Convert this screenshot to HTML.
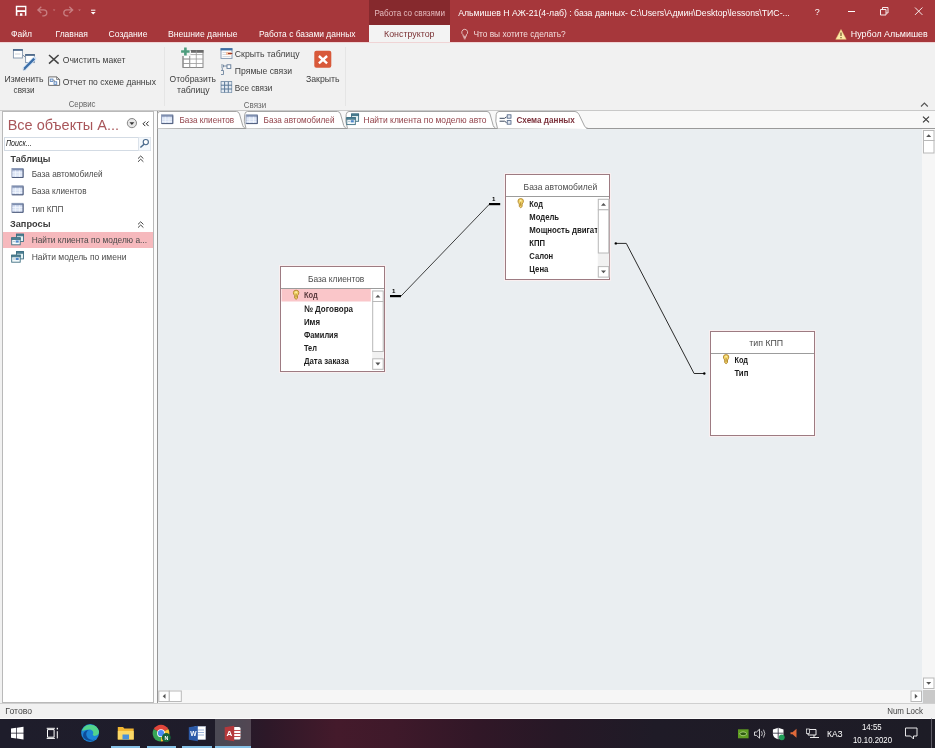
<!DOCTYPE html>
<html lang="ru">
<head>
<meta charset="utf-8">
<title>Access</title>
<style>
*{box-sizing:border-box;margin:0;padding:0}
html,body{width:935px;height:748px;overflow:hidden;background:#f1f1f1;font-family:"Liberation Sans","DejaVu Sans",sans-serif;font-size:9.2px;color:#444}
.abs{position:absolute}
#title{left:0;top:0;width:935px;height:42px;background:#a6373b}
#ctx{left:369px;top:0;width:81px;height:25px;background:#86292d}
#atab{left:369px;top:25px;width:81px;height:18px;background:#f3f3f3}
#ribbon{left:0;top:42px;width:935px;height:69px;background:#f1f1f1;border-top:1px solid #f0d4d5;border-bottom:1px solid #c9c9c9}
.vsep{width:1px;background:#e5e5e5;top:47px;height:59px}
#nav{left:2px;top:111px;width:152px;height:592px;background:#fff;border:1px solid #b9b9b9}
#search{left:4px;top:137px;width:147px;height:14px;background:#fff;border:1px solid #d3dbe4}
#sel{left:3px;top:232px;width:150px;height:16px;background:#f6b9bd}
#tabstrip{left:157px;top:111px;width:778px;height:18px;background:#f8f8f8;border-left:1px solid #969696}
#doc{left:157px;top:128px;width:778px;height:575px;background:#eaeef1;border-top:1px solid #9a9a9a;border-left:1px solid #969696}
#vscroll{left:922px;top:129px;width:13px;height:561px;background:#f6f6f6}
#hscroll{left:158px;top:690px;width:764px;height:13px;background:#f6f6f6}
#corner{left:923px;top:690px;width:12px;height:13px;background:#c9c9c9}
.sb{background:#fff;border:1px solid #b9b9b9}
.tbl{background:#fff;border:1px solid #9d7b82;box-shadow:0 0 0 1px rgba(252,238,240,.9)}
.tbl .h{position:absolute;left:0;right:0;top:0;border-bottom:1px solid #9c9c9c}
#status{left:0;top:703px;width:935px;height:16px;background:#f1f1f1;border-top:1px solid #cfcfcf;border-bottom:1px solid #fbfbfb}
#task{left:0;top:719px;width:935px;height:29px;background:linear-gradient(90deg,#1e1d2b 0%,#1f1c2a 24%,#2d1828 28.500%,#441a2b 36%,#3f192a 42%,#311727 51%,#261826 60%,#1f1b27 70%,#1d1c26 100%)}
#tact{left:215px;top:719px;width:36px;height:29px;background:rgba(255,255,255,.2)}
.ul{top:746px;height:2px;background:#86c1e6}
svg{position:absolute;left:0;top:0;will-change:transform}
text{font-family:"Liberation Sans","DejaVu Sans",sans-serif;white-space:pre}
</style>
</head>
<body>
<div id="title" class="abs"></div>
<div id="ctx" class="abs"></div>
<div id="atab" class="abs"></div>
<div id="ribbon" class="abs"></div>
<div class="abs vsep" style="left:164px"></div>
<div class="abs vsep" style="left:345px"></div>
<div id="tabstrip" class="abs"></div>
<div class="abs" style="left:154px;top:112px;width:3px;height:591px;background:#fbfbfb"></div>
<div id="nav" class="abs"></div>
<div id="search" class="abs"></div>
<div id="sel" class="abs"></div>
<div id="doc" class="abs"></div>
<div id="vscroll" class="abs"></div>
<div id="hscroll" class="abs"></div>
<div id="corner" class="abs"></div>
<div class="abs tbl" style="left:280px;top:266px;width:105px;height:105.5px"><div class="h" style="height:22px"></div></div>
<div class="abs tbl" style="left:504.5px;top:174px;width:105px;height:105.5px"><div class="h" style="height:22px"></div></div>
<div class="abs tbl" style="left:710px;top:330.5px;width:105px;height:105.5px"><div class="h" style="height:22px"></div></div>

<div id="status" class="abs"></div>
<div id="task" class="abs"></div>
<div id="tact" class="abs"></div>
<div class="abs ul" style="left:111px;width:29px"></div>
<div class="abs ul" style="left:147px;width:29px"></div>
<div class="abs ul" style="left:182px;width:30px"></div>
<div class="abs ul" style="left:215px;width:36px"></div>
<svg width="935" height="748" viewBox="0 0 935 748">
<text x="374.5" y="15.6" font-size="9" fill="#e6bcbf" textLength="70.5" lengthAdjust="spacingAndGlyphs">Работа со связями</text>
<text x="458.2" y="15.6" font-size="9" fill="#ffffff" textLength="331.6" lengthAdjust="spacingAndGlyphs">Альмишев Н АЖ-21(4-лаб) : база данных- C:\Users\Админ\Desktop\lessons\ТИС-...</text>
<text x="11.0" y="37.2" font-size="9.4" fill="#ffffff" textLength="21.0" lengthAdjust="spacingAndGlyphs">Файл</text>
<text x="55.5" y="37.2" font-size="9.4" fill="#ffffff" textLength="32.5" lengthAdjust="spacingAndGlyphs">Главная</text>
<text x="108.5" y="37.2" font-size="9.4" fill="#ffffff" textLength="39.0" lengthAdjust="spacingAndGlyphs">Создание</text>
<text x="168.0" y="37.2" font-size="9.4" fill="#ffffff" textLength="69.5" lengthAdjust="spacingAndGlyphs">Внешние данные</text>
<text x="259.0" y="37.2" font-size="9.4" fill="#ffffff" textLength="96.5" lengthAdjust="spacingAndGlyphs">Работа с базами данных</text>
<text x="384.0" y="37.2" font-size="9.4" fill="#7c3335" textLength="50.5" lengthAdjust="spacingAndGlyphs">Конструктор</text>
<text x="473.4" y="37.2" font-size="9.4" fill="#f3dcdc" textLength="92.3" lengthAdjust="spacingAndGlyphs">Что вы хотите сделать?</text>
<text x="850.8" y="37.2" font-size="9.4" fill="#ffffff" textLength="77.0" lengthAdjust="spacingAndGlyphs">Нурбол Альмишев</text>
<text x="814.8" y="14.8" font-size="9.5" fill="#ffffff" textLength="5.0" lengthAdjust="spacingAndGlyphs">?</text>
<path d="M848 11.5H855" fill="none" stroke="#ffffff" stroke-width="1"/>
<path d="M880.5 9.5h5.5v5.5h-5.5z M882.5 9.5v-2h5.5v5.5h-2" fill="none" stroke="#ffffff" stroke-width="0.9"/>
<path d="M915 7.5l7.4 7.4M922.4 7.5l-7.4 7.4" fill="none" stroke="#ffffff" stroke-width="0.9"/>
<path d="M15.8 5.7h10.6v10.1h-10.6z" fill="#ffffff"/>
<rect x="17.2" y="7.2" width="7.9" height="3" fill="#a6373b"/>
<rect x="17.4" y="12" width="7.5" height="3.8" fill="#a6373b"/>
<rect x="20" y="13.3" width="2.4" height="2.5" fill="#ffffff"/>
<path d="M41.3 6.8l-3.4 3.1l3.4 3.1 M38.2 9.9h5.6a3 3 0 0 1 0 6h-1.5" fill="none" stroke="#c87f82" stroke-width="1.3"/>
<path d="M52.8 9.6l1.3 1.5l1.3-1.500z" fill="#c87f82"/>
<path d="M69.300 6.800l3.400 3.100l-3.400 3.100 M72.400 9.900h-5.600a3 3 0 0 0 0 6h1.500" fill="none" stroke="#c87f82" stroke-width="1.3"/>
<path d="M78.200 9.600l1.300 1.500l1.300-1.500z" fill="#c87f82"/>
<path d="M91 10.200h4.400" fill="none" stroke="#ffffff" stroke-width="1"/>
<path d="M90.800 11.900h4.800l-2.400 2.500z" fill="#ffffff"/>
<path d="M464.7 29.3a3 3 0 0 1 1.6 5.5v1.5h-3.2v-1.5a3 3 0 0 1 1.6-5.5z M463.4 37.6h2.6 M463.8 38.8h1.8" fill="none" stroke="#f3dcdc" stroke-width="0.8"/>
<path d="M841 29.5l5.2 9.8h-10.4z" fill="#fbe9a7" stroke="#e9cf7c" stroke-width="0.5"/>
<path d="M841 32.6v3.4 M841 37v1.2" fill="none" stroke="#6b4b1d" stroke-width="1.1"/>
<text x="4.5" y="81.9" font-size="9.2" fill="#3d3d3d" textLength="39.1" lengthAdjust="spacingAndGlyphs">Изменить</text>
<text x="13.6" y="93.3" font-size="9.2" fill="#3d3d3d" textLength="20.9" lengthAdjust="spacingAndGlyphs">связи</text>
<text x="62.7" y="63.1" font-size="9.2" fill="#3d3d3d" textLength="62.8" lengthAdjust="spacingAndGlyphs">Очистить макет</text>
<text x="62.7" y="85.4" font-size="9.2" fill="#3d3d3d" textLength="93.3" lengthAdjust="spacingAndGlyphs">Отчет по схеме данных</text>
<text x="68.7" y="107.4" font-size="9.2" fill="#666" textLength="26.8" lengthAdjust="spacingAndGlyphs">Сервис</text>
<text x="169.6" y="81.9" font-size="9.2" fill="#3d3d3d" textLength="46.4" lengthAdjust="spacingAndGlyphs">Отобразить</text>
<text x="177.0" y="93.3" font-size="9.2" fill="#3d3d3d" textLength="32.6" lengthAdjust="spacingAndGlyphs">таблицу</text>
<text x="234.8" y="56.9" font-size="9.2" fill="#3d3d3d" textLength="64.7" lengthAdjust="spacingAndGlyphs">Скрыть таблицу</text>
<text x="234.8" y="73.9" font-size="9.2" fill="#3d3d3d" textLength="57.2" lengthAdjust="spacingAndGlyphs">Прямые связи</text>
<text x="234.8" y="90.5" font-size="9.2" fill="#3d3d3d" textLength="37.6" lengthAdjust="spacingAndGlyphs">Все связи</text>
<text x="306.0" y="81.9" font-size="9.2" fill="#3d3d3d" textLength="33.6" lengthAdjust="spacingAndGlyphs">Закрыть</text>
<text x="243.8" y="107.5" font-size="9.2" fill="#666" textLength="22.4" lengthAdjust="spacingAndGlyphs">Связи</text>
<path d="M921 106.5l3.4-3.4l3.4 3.4" fill="none" stroke="#555" stroke-width="1.1"/>
<rect x="13.4" y="49.6" width="9" height="8.4" fill="#fff" stroke="#8295ac" stroke-width="0.9"/>
<rect x="13" y="49.2" width="9.8" height="1.6" fill="#3f5e80"/>
<path d="M15 54h5.5" fill="none" stroke="#c4c9d0" stroke-width="0.8"/>
<rect x="25.6" y="54.6" width="8.8" height="8" fill="#fff" stroke="#8295ac" stroke-width="0.9"/>
<rect x="25.2" y="54.2" width="9.6" height="1.6" fill="#3f5e80"/>
<path d="M22.8 55l2.6 2.2" fill="none" stroke="#6f7f93" stroke-width="0.9"/>
<path d="M34.300 58.600L24.300 68.800" fill="none" stroke="#cfe0f3" stroke-width="4" stroke-linecap="round"/>
<path d="M34.300 58.600L24.300 68.800" fill="none" stroke="#3a6ea8" stroke-width="2.3"/>
<path d="M24.700 68.300l-1.900 2.200l2.600-1.300z" fill="#3a5a80"/>
<path d="M49 55l9.600 8.600 M58.600 55l-9.600 8.600" fill="none" stroke="#444" stroke-width="1.5"/>
<path d="M48.600 76.900h8l3 2.600v5.900h-11z" fill="#fff" stroke="#5d5d5d" stroke-width="0.9"/>
<path d="M56.600 76.900v2.600h3" fill="none" stroke="#5d5d5d" stroke-width="0.7"/>
<rect x="50.2" y="79" width="2.8" height="2.5" fill="#dfe8f5" stroke="#3d6eb0" stroke-width="0.7"/>
<rect x="54" y="81.8" width="2.8" height="2.5" fill="#dfe8f5" stroke="#3d6eb0" stroke-width="0.7"/>
<path d="M53 80.300h1.500v1.500" fill="none" stroke="#777" stroke-width="0.6"/>
<rect x="183" y="50.5" width="20" height="17" fill="#fff" stroke="#8a8a8a" stroke-width="1"/>
<rect x="191" y="50" width="12.5" height="2.8" fill="#6b6b6b"/>
<path d="M183 54.600h20 M183 59h20 M183 63.500h20 M189.700 50.500v17 M196.300 50.500v17" fill="none" stroke="#9b9b9b" stroke-width="0.8"/>
<rect x="180.5" y="47" width="10" height="9" fill="#f1f1f1"/>
<path d="M181.100 51.500h8.500 M185.400 47.600v7.800" fill="none" stroke="#4d9c7d" stroke-width="2.6"/>
<path d="M189.700 56v11.500 M183 59h7 M183 63.500h7" fill="none" stroke="#9b9b9b" stroke-width="0.8"/>
<path d="M183 56v11.500" fill="none" stroke="#8a8a8a" stroke-width="1"/>
<rect x="221" y="48.6" width="11" height="9.8" fill="#fdfdfd" stroke="#7f93ad" stroke-width="0.9"/>
<rect x="220.6" y="48.2" width="11.8" height="2.2" fill="#3d6ea3"/>
<path d="M222.500 52.500h8 M222.500 54.500h4 M222.500 56.500h8" fill="none" stroke="#c9ccd2" stroke-width="0.7"/>
<rect x="226" y="52" width="5.5" height="3" fill="#f3c3a5"/>
<path d="M228 53.500h4.300" fill="none" stroke="#9c3a2a" stroke-width="1.1"/>
<rect x="227" y="64.8" width="3.8" height="3.6" fill="#fff" stroke="#5f7896" stroke-width="0.9"/>
<path d="M221 65h2.500v2h-2.500 M223.500 66h3.500" fill="none" stroke="#5f7896" stroke-width="0.8"/>
<path d="M221 70.500h2.500v4h-2.500 M222.300 68v2.500" fill="none" stroke="#5f7896" stroke-width="0.8"/>
<rect x="220.7" y="81.2" width="11.4" height="11.6" fill="#5a7897"/>
<rect x="221.4" y="81.9" width="2.7" height="2.8" fill="#e4ebf3"/>
<rect x="221.4" y="85.7" width="2.7" height="2.8" fill="#e4ebf3"/>
<rect x="221.4" y="89.5" width="2.7" height="2.8" fill="#e4ebf3"/>
<rect x="225.1" y="81.9" width="2.7" height="2.8" fill="#e4ebf3"/>
<rect x="225.1" y="85.7" width="2.7" height="2.8" fill="#e4ebf3"/>
<rect x="225.1" y="89.5" width="2.7" height="2.8" fill="#e4ebf3"/>
<rect x="228.8" y="81.9" width="2.7" height="2.8" fill="#e4ebf3"/>
<rect x="228.8" y="85.7" width="2.7" height="2.8" fill="#e4ebf3"/>
<rect x="228.8" y="89.5" width="2.7" height="2.8" fill="#e4ebf3"/>
<rect x="314.3" y="50.7" width="17" height="17" fill="#d8593a" rx="2"/>
<path d="M318.900 56l8.200 7.300 M327.100 56l-8.200 7.300" fill="none" stroke="#ffffff" stroke-width="2.4"/>
<text x="7.7" y="129.8" font-size="14.2" fill="#a9565a" textLength="111.3" lengthAdjust="spacingAndGlyphs">Все объекты A...</text>
<circle cx="131.900" cy="123.100" r="4.600" fill="#e6e6e6" stroke="#858585" stroke-width="1"/>
<path d="M129.500 122.200h4.800l-2.400 2.700z" fill="#333"/>
<path d="M145.300 121.500l-2.300 2.300l2.300 2.300 M148.600 121.500l-2.300 2.300l2.300 2.300" fill="none" stroke="#222" stroke-width="1"/>
<text x="6.0" y="146.4" font-size="9" fill="#222" font-style="italic" textLength="25.7" lengthAdjust="spacingAndGlyphs">Поиск...</text>
<rect x="138.5" y="137.5" width="12" height="13" fill="#f4f8fc"/>
<path d="M138.500 137.500v13" fill="none" stroke="#dbe2ea" stroke-width="1"/>
<circle cx="145.800" cy="142.100" r="2.600" fill="#fff" stroke="#4a6a8c" stroke-width="1.1"/>
<path d="M144 144.200l-3.600 3.300" fill="none" stroke="#4a6a8c" stroke-width="1.5"/>
<text x="10.6" y="161.5" font-size="9.6" fill="#3b3b3b" font-weight="bold" textLength="39.9" lengthAdjust="spacingAndGlyphs">Таблицы</text>
<text x="10.0" y="227.3" font-size="9.6" fill="#3b3b3b" font-weight="bold" textLength="40.5" lengthAdjust="spacingAndGlyphs">Запросы</text>
<path d="M138 158.6l2.7-2.6l2.7 2.6 M138 161.8l2.7-2.6l2.7 2.6" fill="none" stroke="#444" stroke-width="1"/>
<path d="M138 224.4l2.7-2.6l2.7 2.6 M138 227.60000000000002l2.7-2.6l2.7 2.6" fill="none" stroke="#444" stroke-width="1"/>
<rect x="11.9" y="168.5" width="11.2" height="9" fill="#d6e0f4" stroke="#8290ad" stroke-width="0.8"/>
<rect x="12.200000000000001" y="168.7" width="10.6" height="1.7" fill="#7f8fb0"/>
<path d="M12.4 172.8h10.2 M12.4 175.1h10.2 M15.6 170.5v6.5 M19.4 170.5v6.5" fill="none" stroke="#f4f7fc" stroke-width="0.8"/>
<path d="M12.200000000000001 177.5h10.899999999999999v-8.5" fill="none" stroke="#4f5d7c" stroke-width="1"/>
<rect x="11.9" y="185.8" width="11.2" height="9" fill="#d6e0f4" stroke="#8290ad" stroke-width="0.8"/>
<rect x="12.200000000000001" y="186.0" width="10.6" height="1.7" fill="#7f8fb0"/>
<path d="M12.4 190.10000000000002h10.2 M12.4 192.4h10.2 M15.6 187.8v6.5 M19.4 187.8v6.5" fill="none" stroke="#f4f7fc" stroke-width="0.8"/>
<path d="M12.200000000000001 194.8h10.899999999999999v-8.5" fill="none" stroke="#4f5d7c" stroke-width="1"/>
<rect x="11.9" y="203.3" width="11.2" height="9" fill="#d6e0f4" stroke="#8290ad" stroke-width="0.8"/>
<rect x="12.200000000000001" y="203.5" width="10.6" height="1.7" fill="#7f8fb0"/>
<path d="M12.4 207.60000000000002h10.2 M12.4 209.9h10.2 M15.6 205.3v6.5 M19.4 205.3v6.5" fill="none" stroke="#f4f7fc" stroke-width="0.8"/>
<path d="M12.200000000000001 212.3h10.899999999999999v-8.5" fill="none" stroke="#4f5d7c" stroke-width="1"/>
<rect x="16.5" y="234.2" width="7" height="7.3" fill="#e4f3f5" stroke="#3f6f82" stroke-width="0.9"/>
<rect x="16.5" y="234.2" width="7" height="1.6" fill="#4f889c" stroke="#3f6f82" stroke-width="0.9"/>
<rect x="11.7" y="237.79999999999998" width="8.5" height="7" fill="#f4fafb" stroke="#3f6f82" stroke-width="0.9"/>
<rect x="11.7" y="237.79999999999998" width="8.5" height="1.6" fill="#4f889c" stroke="#3f6f82" stroke-width="0.9"/>
<rect x="15.7" y="240.39999999999998" width="3" height="2.2" fill="#4d86c8"/>
<path d="M12.899999999999999 241.6h2.200" fill="none" stroke="#9fb4c4" stroke-width="0.8"/>
<rect x="16.5" y="251.6" width="7" height="7.3" fill="#e4f3f5" stroke="#3f6f82" stroke-width="0.9"/>
<rect x="16.5" y="251.6" width="7" height="1.6" fill="#4f889c" stroke="#3f6f82" stroke-width="0.9"/>
<rect x="11.7" y="255.2" width="8.5" height="7" fill="#f4fafb" stroke="#3f6f82" stroke-width="0.9"/>
<rect x="11.7" y="255.2" width="8.5" height="1.6" fill="#4f889c" stroke="#3f6f82" stroke-width="0.9"/>
<rect x="15.7" y="257.8" width="3" height="2.2" fill="#4d86c8"/>
<path d="M12.899999999999999 259.0h2.200" fill="none" stroke="#9fb4c4" stroke-width="0.8"/>
<text x="31.7" y="176.8" font-size="9.2" fill="#4a4a4a" textLength="71.0" lengthAdjust="spacingAndGlyphs">База автомобилей</text>
<text x="31.7" y="194.2" font-size="9.2" fill="#4a4a4a" textLength="54.8" lengthAdjust="spacingAndGlyphs">База клиентов</text>
<text x="31.7" y="211.9" font-size="9.2" fill="#4a4a4a" textLength="31.7" lengthAdjust="spacingAndGlyphs">тип КПП</text>
<text x="31.7" y="242.6" font-size="9.2" fill="#4a4a4a" textLength="115.3" lengthAdjust="spacingAndGlyphs">Найти клиента по моделю а...</text>
<text x="31.7" y="260.2" font-size="9.2" fill="#4a4a4a" textLength="94.7" lengthAdjust="spacingAndGlyphs">Найти модель по имени</text>
<path d="M497.5 128.500Q494.8 121 496.2 114.500q0.500-3 2.800-3H575q2.500 0 4 3l5.500 11.500q1.200 3 4 3z" fill="#fff"/>
<path d="M497.5 128.500Q494.8 121 496.2 114.500q0.500-3 2.800-3H575q2.500 0 4 3l5.500 11.500q1.200 2.500 4 2.500" fill="none" stroke="#9a9a9a" stroke-width="0.9"/>
<path d="M347.5 128.500Q344.8 121 346.2 114.500q0.500-3 2.800-3H487q2.200 0 3 2.500l3.200 11.500q0.500 2 2 2z" fill="#fff"/>
<path d="M347.5 128.500Q344.8 121 346.2 114.500q0.500-3 2.800-3H487q2.200 0 3 2.500l3.200 11.500q0.500 2 2 2" fill="none" stroke="#9a9a9a" stroke-width="0.9"/>
<path d="M246.0 128.500Q243.3 121 244.7 114.500q0.500-3 2.800-3H337.5q2.200 0 3 2.500l3.200 11.500q0.500 2 2 2z" fill="#fff"/>
<path d="M246.0 128.500Q243.3 121 244.7 114.500q0.500-3 2.800-3H337.5q2.200 0 3 2.500l3.200 11.500q0.500 2 2 2" fill="none" stroke="#9a9a9a" stroke-width="0.9"/>
<path d="M157.5 128.5V114q0-2.500 2.500-2.500H236.5q2.200 0 3 2.500l3.200 11.500q0.500 2 2 2z" fill="#fff"/>
<path d="M157.5 128.5V114q0-2.500 2.500-2.500H236.5q2.200 0 3 2.500l3.200 11.500q0.500 2 2 2" fill="none" stroke="#9a9a9a" stroke-width="0.9"/>
<rect x="161.5" y="114.8" width="11.3" height="8.8" fill="#d6e0f4" stroke="#8290ad" stroke-width="0.8"/>
<rect x="161.8" y="115.0" width="10.700000000000001" height="1.7" fill="#7f8fb0"/>
<path d="M162.0 119.1h10.3 M162.0 121.39999999999999h10.3 M165.3 116.8v6.300000000000001 M169.0 116.8v6.300000000000001" fill="none" stroke="#f4f7fc" stroke-width="0.8"/>
<path d="M161.8 123.6h11.0v-8.3" fill="none" stroke="#4f5d7c" stroke-width="1"/>
<rect x="246" y="114.8" width="11.3" height="8.8" fill="#d6e0f4" stroke="#8290ad" stroke-width="0.8"/>
<rect x="246.3" y="115.0" width="10.700000000000001" height="1.7" fill="#7f8fb0"/>
<path d="M246.5 119.1h10.3 M246.5 121.39999999999999h10.3 M249.8 116.8v6.300000000000001 M253.5 116.8v6.300000000000001" fill="none" stroke="#f4f7fc" stroke-width="0.8"/>
<path d="M246.3 123.6h11.0v-8.3" fill="none" stroke="#4f5d7c" stroke-width="1"/>
<rect x="351.6" y="114" width="7" height="7.3" fill="#e4f3f5" stroke="#3f6f82" stroke-width="0.9"/>
<rect x="351.6" y="114" width="7" height="1.6" fill="#4f889c" stroke="#3f6f82" stroke-width="0.9"/>
<rect x="346.8" y="117.6" width="8.5" height="7" fill="#f4fafb" stroke="#3f6f82" stroke-width="0.9"/>
<rect x="346.8" y="117.6" width="8.5" height="1.6" fill="#4f889c" stroke="#3f6f82" stroke-width="0.9"/>
<rect x="350.8" y="120.2" width="3" height="2.2" fill="#4d86c8"/>
<path d="M348.0 121.4h2.200" fill="none" stroke="#9fb4c4" stroke-width="0.8"/>
<path d="M499.600 118.300h5l2-1.500 M499.600 121.200h5l2 1.500" fill="none" stroke="#3a485e" stroke-width="1"/>
<rect x="507.2" y="114.8" width="3.8" height="3.4" fill="#dfe6f0" stroke="#4a5f80" stroke-width="0.8"/>
<rect x="507.2" y="120.6" width="3.8" height="3.6" fill="#dfe6f0" stroke="#4a5f80" stroke-width="0.8"/>
<text x="179.4" y="122.6" font-size="9.2" fill="#93434b" textLength="54.8" lengthAdjust="spacingAndGlyphs">База клиентов</text>
<text x="263.6" y="122.6" font-size="9.2" fill="#93434b" textLength="70.9" lengthAdjust="spacingAndGlyphs">База автомобилей</text>
<text x="363.5" y="122.6" font-size="9.2" fill="#93434b" textLength="123.0" lengthAdjust="spacingAndGlyphs">Найти клиента по моделю авто</text>
<text x="516.5" y="122.6" font-size="9.2" fill="#7d323c" font-weight="bold" textLength="58.3" lengthAdjust="spacingAndGlyphs">Схема данных</text>
<path d="M923 116.7l6 5.6 M929 116.7l-6 5.6" fill="none" stroke="#333" stroke-width="1.1"/>
<path d="M390 296.1H401" fill="none" stroke="#000" stroke-width="2.2"/>
<path d="M401 296.1L489.5 204.1" fill="none" stroke="#2a2a2a" stroke-width="0.9"/>
<path d="M489 204.1H500.2" fill="none" stroke="#000" stroke-width="2.2"/>
<text x="391.9" y="292.6" font-size="6" fill="#000" font-weight="bold" textLength="3.4" lengthAdjust="spacingAndGlyphs">1</text>
<text x="491.9" y="200.8" font-size="6" fill="#000" font-weight="bold" textLength="3.4" lengthAdjust="spacingAndGlyphs">1</text>
<path d="M615.600 243.400H626.300L694.100 373.500H704.400" fill="none" stroke="#2a2a2a" stroke-width="1"/>
<circle cx="615.800" cy="243.400" r="1.200" fill="#000"/><circle cx="704.300" cy="373.500" r="1.200" fill="#000"/>
<rect x="281.5" y="289" width="89.3" height="12.5" fill="#fac6c9"/>
<text x="307.9" y="282.4" font-size="9.2" fill="#4a4a4a" textLength="56.4" lengthAdjust="spacingAndGlyphs">База клиентов</text>
<path d="M293.4 292.6a2.700 2.400 0 0 1 5.400 0q0 1.600-1.300 3v2.600l-1.400 1.100l-1.400-1.100v-2.600q-1.300-1.400-1.300-3z" fill="#f3d76c" stroke="#b0832a" stroke-width="0.9"/>
<path d="M296.1 293.8v3.600" fill="none" stroke="#a37a25" stroke-width="0.8"/>
<circle cx="296.1" cy="292.2" r="0.7" fill="#fff7d0"/>
<text x="303.9" y="298.4" font-size="9.2" fill="#5c3c40" font-weight="bold" textLength="13.9" lengthAdjust="spacingAndGlyphs">Код</text>
<text x="303.9" y="311.5" font-size="9.2" fill="#1c1c1c" font-weight="bold" textLength="49.1" lengthAdjust="spacingAndGlyphs">№ Договора</text>
<text x="303.9" y="324.7" font-size="9.2" fill="#1c1c1c" font-weight="bold" textLength="16.1" lengthAdjust="spacingAndGlyphs">Имя</text>
<text x="303.9" y="337.8" font-size="9.2" fill="#1c1c1c" font-weight="bold" textLength="34.1" lengthAdjust="spacingAndGlyphs">Фамилия</text>
<text x="303.9" y="351.0" font-size="9.2" fill="#1c1c1c" font-weight="bold" textLength="13.0" lengthAdjust="spacingAndGlyphs">Тел</text>
<text x="303.9" y="364.1" font-size="9.2" fill="#1c1c1c" font-weight="bold" textLength="45.1" lengthAdjust="spacingAndGlyphs">Дата заказа</text>
<rect x="372.2" y="290.5" width="11.5" height="79.30000000000001" fill="#f1f1f1"/>
<rect x="372.7" y="291.0" width="10.5" height="10.5" fill="#fff" stroke="#b9b9b9" stroke-width="1"/>
<path d="M375.4 297.5h5l-2.5-2.8z" fill="#555"/>
<rect x="372.7" y="301.5" width="10.5" height="50.0" fill="#fff" stroke="#b9b9b9" stroke-width="1"/>
<rect x="372.7" y="358.8" width="10.5" height="10.5" fill="#fff" stroke="#b9b9b9" stroke-width="1"/>
<path d="M375.4 362.6h5l-2.5 2.8z" fill="#555"/>
<text x="523.6" y="189.9" font-size="9.2" fill="#4a4a4a" textLength="73.6" lengthAdjust="spacingAndGlyphs">База автомобилей</text>
<path d="M518.0 201.0a2.700 2.400 0 0 1 5.400 0q0 1.600-1.300 3v2.600l-1.400 1.100l-1.400-1.100v-2.600q-1.300-1.400-1.300-3z" fill="#f3d76c" stroke="#b0832a" stroke-width="0.9"/>
<path d="M520.7 202.2v3.600" fill="none" stroke="#a37a25" stroke-width="0.8"/>
<circle cx="520.7" cy="200.6" r="0.7" fill="#fff7d0"/>
<clipPath id="c2"><rect x="520" y="196" width="77.2" height="82"/></clipPath><g clip-path="url(#c2)">
<text x="529.3" y="206.6" font-size="9.2" fill="#1c1c1c" font-weight="bold" textLength="13.7" lengthAdjust="spacingAndGlyphs">Код</text>
<text x="529.3" y="219.8" font-size="9.2" fill="#1c1c1c" font-weight="bold" textLength="29.7" lengthAdjust="spacingAndGlyphs">Модель</text>
<text x="529.3" y="232.9" font-size="9.2" fill="#1c1c1c" font-weight="bold" textLength="82.7" lengthAdjust="spacingAndGlyphs">Мощность двигателя</text>
<text x="529.3" y="246.1" font-size="9.2" fill="#1c1c1c" font-weight="bold" textLength="15.7" lengthAdjust="spacingAndGlyphs">КПП</text>
<text x="529.3" y="259.2" font-size="9.2" fill="#1c1c1c" font-weight="bold" textLength="23.9" lengthAdjust="spacingAndGlyphs">Салон</text>
<text x="529.3" y="272.4" font-size="9.2" fill="#1c1c1c" font-weight="bold" textLength="19.1" lengthAdjust="spacingAndGlyphs">Цена</text>
</g>
<rect x="597.8" y="198.8" width="11.5" height="78.80000000000001" fill="#f1f1f1"/>
<rect x="598.3" y="199.3" width="10.5" height="10.5" fill="#fff" stroke="#b9b9b9" stroke-width="1"/>
<path d="M601.0 205.8h5l-2.5-2.8z" fill="#555"/>
<rect x="598.3" y="209.8" width="10.5" height="43.19999999999999" fill="#fff" stroke="#b9b9b9" stroke-width="1"/>
<rect x="598.3" y="266.6" width="10.5" height="10.5" fill="#fff" stroke="#b9b9b9" stroke-width="1"/>
<path d="M601.0 270.40000000000003h5l-2.5 2.8z" fill="#555"/>
<text x="749.3" y="346.3" font-size="9.2" fill="#4a4a4a" textLength="33.9" lengthAdjust="spacingAndGlyphs">тип КПП</text>
<path d="M723.4 357.0a2.700 2.400 0 0 1 5.400 0q0 1.600-1.300 3v2.600l-1.400 1.100l-1.400-1.100v-2.600q-1.300-1.400-1.300-3z" fill="#f3d76c" stroke="#b0832a" stroke-width="0.9"/>
<path d="M726.1 358.2v3.600" fill="none" stroke="#a37a25" stroke-width="0.8"/>
<circle cx="726.1" cy="356.6" r="0.7" fill="#fff7d0"/>
<text x="734.4" y="362.8" font-size="9.2" fill="#1c1c1c" font-weight="bold" textLength="13.6" lengthAdjust="spacingAndGlyphs">Код</text>
<text x="734.4" y="375.9" font-size="9.2" fill="#1c1c1c" font-weight="bold" textLength="14.0" lengthAdjust="spacingAndGlyphs">Тип</text>
<rect x="923.5" y="130.5" width="10.5" height="10" fill="#fff" stroke="#b9b9b9" stroke-width="1"/>
<path d="M926.2 137h5l-2.5-2.8z" fill="#555"/>
<rect x="923.5" y="140.5" width="10.5" height="12.5" fill="#fff" stroke="#b9b9b9" stroke-width="1"/>
<rect x="923.5" y="678" width="10.5" height="10.5" fill="#fff" stroke="#b9b9b9" stroke-width="1"/>
<path d="M926.2 682h5l-2.5 2.8z" fill="#555"/>
<rect x="158.8" y="691" width="10.5" height="10.5" fill="#fff" stroke="#b9b9b9" stroke-width="1"/>
<path d="M165.5 693.7v5l-2.8-2.5z" fill="#555"/>
<rect x="169.3" y="691" width="12" height="10.5" fill="#fff" stroke="#b9b9b9" stroke-width="1"/>
<rect x="911" y="691" width="10.5" height="10.5" fill="#fff" stroke="#b9b9b9" stroke-width="1"/>
<path d="M914.8 693.7v5l2.8-2.5z" fill="#555"/>
<text x="5.3" y="713.5" font-size="9" fill="#444" textLength="26.7" lengthAdjust="spacingAndGlyphs">Готово</text>
<text x="887.2" y="713.7" font-size="9" fill="#444" textLength="35.8" lengthAdjust="spacingAndGlyphs">Num Lock</text>
<path d="M11 728.6l5.3-.8v5h-5.3z M17 727.7l6.5-1v6.1H17z M11 733.5h5.3v5l-5.3-.8z M17 733.5h6.5v6.1l-6.5-1z" fill="#ffffff"/>
<path d="M47.500 729.600h6.600v7.600h-6.600z" fill="none" stroke="#ffffff" stroke-width="1"/>
<path d="M46.700 728.300h8.200 M46.700 738.400h8.200 M57.300 731.200v7.200" fill="none" stroke="#ffffff" stroke-width="1"/>
<rect x="56.7" y="727.8" width="1.3" height="1.6" fill="#ffffff"/>
<circle cx="90.100" cy="733" r="9" fill="#1c84d6"/>
<path d="M82 730.500a9 9 0 0 1 17 0.800c0.300 3.200-2.100 4.600-4.400 4.600c-2.100 0-2.100-1.500-1.400-2.300c0.600-2.300-1.400-4.200-4-4.200c-3.100 0-5.800 1.700-7.200 1.100z" fill="#52d48c"/>
<path d="M83.600 737.800c-1.600-4.200 1-7.900 5.200-7.900c-2.100 1-3.100 3.400-2.300 5.900c1 3.300 4.700 5 8.600 3.700a9 9 0 0 1-11.500-1.700z" fill="#0e4c99"/>
<path d="M117.8 727h5.2l1.400 1.500h9.300v11h-15.900z" fill="#f2b632"/>
<path d="M117.8 731h15.900v8.500h-15.900z" fill="#fbd867"/>
<rect x="122.5" y="734.5" width="6.5" height="5" fill="#4a90d9"/>
<path d="M161 733.2L153.73 729.00A8.4 8.4 0 0 1 168.27 729.00z" fill="#e2463b"/>
<path d="M161 733.2L168.27 729.00A8.4 8.4 0 0 1 161.00 741.60z" fill="#f7c433"/>
<path d="M161 733.2L161.00 741.60A8.4 8.4 0 0 1 153.73 729.00z" fill="#36a556"/>
<circle cx="161" cy="733.2" r="3.900" fill="#fff"/>
<circle cx="161" cy="733.2" r="3.100" fill="#4a8af4"/>
<circle cx="166.300" cy="737.600" r="4.500" fill="#14633a"/>
<text x="164.4" y="739.7" font-size="6" fill="#ffffff" font-weight="bold" textLength="3.9" lengthAdjust="spacingAndGlyphs">N</text>
<rect x="195" y="726.5" width="10.5" height="13" fill="#fff" stroke="#c9d4e8" stroke-width="0.6"/>
<path d="M197.500 730h6.500 M197.500 732.500h6.500 M197.500 735h6.500" fill="none" stroke="#9db4da" stroke-width="1"/>
<path d="M188.800 727.200l9-1.500v15.600l-9-1.500z" fill="#2c5aa8"/>
<text x="190.3" y="736.3" font-size="7" fill="#ffffff" font-weight="bold" textLength="6.3" lengthAdjust="spacingAndGlyphs">W</text>
<rect x="233" y="727" width="7.5" height="12.5" fill="#fff" rx="1.5"/>
<path d="M233 730.500h7.500 M233 733.500h7.500 M233 736.500h7.500" fill="none" stroke="#b4393c" stroke-width="0.9"/>
<path d="M224.700 727.200l9.500-1.500v15.600l-9.500-1.500z" fill="#b4393c"/>
<text x="226.5" y="736.3" font-size="7.5" fill="#ffffff" font-weight="bold" textLength="5.8" lengthAdjust="spacingAndGlyphs">A</text>
<path d="M738 729.300h10.600v9h-10.600z" fill="#5f9c22"/>
<path d="M739.500 733.800c1.500-2.500 5.500-2.500 7.500 0c-2 2.500-6 2.500-7.500 0z" fill="#2f5a12" stroke="#b9dc8a" stroke-width="0.8"/>
<path d="M754.500 732h2l3-2.800v9l-3-2.800h-2z" fill="none" stroke="#ffffff" stroke-width="0.8"/>
<path d="M761.500 731.200q1.600 2.400 0 4.800 M763.500 729.700q2.600 3.900 0 7.800" fill="none" stroke="#ffffff" stroke-width="0.7"/>
<path d="M778.200 727.800l5.300 1.700v4.200c0 3-2.600 4.800-5.300 5.600c-2.700-.8-5.300-2.600-5.300-5.600v-4.200z" fill="#ffffff"/>
<path d="M778.200 727.800v11.500 M772.900 733.200h10.600" fill="none" stroke="#2a2a3a" stroke-width="0.8"/>
<circle cx="781.800" cy="737.300" r="2.900" fill="#1f9e58"/>
<path d="M790.500 732.300h2l4-3.500v9l-4-3.500h-2z" fill="#e0693a"/>
<path d="M808 729.500h8v5.500h-8z M810 737.500h9 M814 735v2.500" fill="none" stroke="#ffffff" stroke-width="0.9"/>
<rect x="806.5" y="729" width="3" height="4.5" fill="#1e1c28" stroke="#ffffff" stroke-width="0.7"/>
<text x="827.0" y="737.0" font-size="9.5" fill="#ffffff" textLength="15.6" lengthAdjust="spacingAndGlyphs">КАЗ</text>
<text x="862.0" y="730.1" font-size="9.2" fill="#ffffff" textLength="19.6" lengthAdjust="spacingAndGlyphs">14:55</text>
<text x="853.0" y="743.2" font-size="9.2" fill="#ffffff" textLength="39.0" lengthAdjust="spacingAndGlyphs">10.10.2020</text>
<path d="M905.500 728h11.500v8h-3.500v3l-3-3h-5z" fill="none" stroke="#ffffff" stroke-width="0.9"/>
<path d="M931.500 718v30" fill="none" stroke="#8a8792" stroke-width="0.6"/>
</svg>
</body>
</html>
